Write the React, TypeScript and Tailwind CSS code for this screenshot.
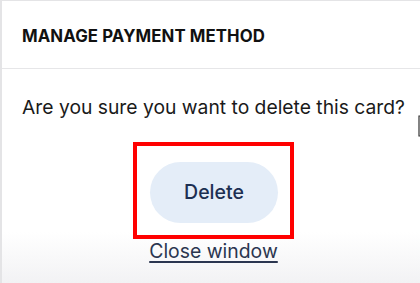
import React from "react";

export default function App() {
  return (
    <div
      className="relative w-[420px] h-[283px] overflow-hidden border-l-2 border-t border-[#e4e4e6] bg-[linear-gradient(to_bottom,#ffffff_0%,#ffffff_82%,#f2f2f4_100%)]"
      style={{ fontFamily: "Inter, 'Liberation Sans', sans-serif" }}
    >
      <div className="h-[68px] border-b border-[#e6e6e8] pl-[20px] pt-[23px]">
        <h1 className="text-[16.8px] leading-[24px] font-bold text-[#111111] tracking-[0.1px]">
          MANAGE PAYMENT METHOD
        </h1>
      </div>
      <div className="flex flex-col items-center pl-[20px] pr-[15px] pt-[24px]">
        <p className="text-[19.3px] leading-[28px] text-[#1a1a1a] whitespace-nowrap">
          Are you sure you want to delete this card?
        </p>
        <div className="mt-[21px] border-[4px] border-[#ff0000] pl-[13px] pr-[12px] pt-[16px] pb-[12px]">
          <button className="w-[128px] h-[61px] rounded-full bg-[#e4edf8] text-[19.5px] font-medium text-[#1c2f52]">
            Delete
          </button>
        </div>
        <a className="mt-[-1px] text-[19.4px] leading-[26px] text-[#2b3650] underline underline-offset-[3px] decoration-[1.5px]">
          Close window
        </a>
      </div>
      <svg className="absolute left-[415px] top-[114px]" width="5" height="22" viewBox="0 0 5 22">
        <path d="M4 1 H2 V21 H4" stroke="#333" strokeWidth="1.2" fill="none" />
      </svg>
    </div>
  );
}
